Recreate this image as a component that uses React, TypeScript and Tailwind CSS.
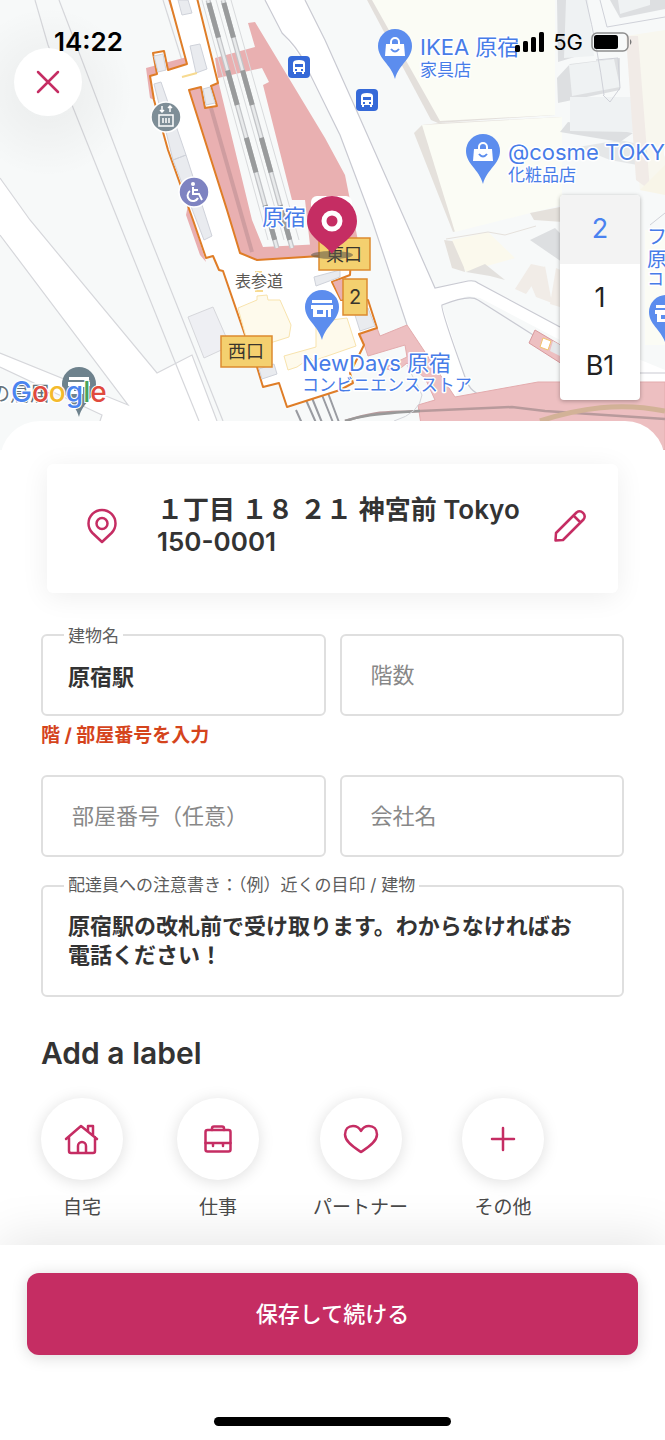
import React from "react";

const bluePin = "M0 0C-4 -15 -17 -20 -17 -33A17 17 0 1 1 17 -33C17 -20 4 -15 0 0Z";

function ShopPin({ x, y }: { x: number; y: number }) {
  return (
    <g transform={`translate(${x} ${y})`}>
      <path d={bluePin} fill="#5c8dee" />
      <path d="M-9 -35H9L10 -23H-10Z" fill="#fff" />
      <path d="M-4 -34V-37A4 4 0 0 1 4 -37V-34" fill="none" stroke="#fff" strokeWidth="2" />
      <path d="M-4 -30Q0 -25 4 -30" fill="none" stroke="#5c8dee" strokeWidth="2" />
    </g>
  );
}

function StorePin({ x, y, color }: { x: number; y: number; color: string }) {
  return (
    <g transform={`translate(${x} ${y})`}>
      <path d={bluePin} fill={color} />
      <path d="M-10 -40H10V-37H-10ZM-11 -35H11V-31H-11ZM-9 -31H9V-23H-9Z" fill="#fff" />
      <path d="M-5 -30H1V-26H-5ZM4 -30H6V-23H4Z" fill={color} />
    </g>
  );
}

function BusStop({ x, y }: { x: number; y: number }) {
  return (
    <g transform={`translate(${x} ${y})`}>
      <rect x="-11" y="-11" width="22" height="22" rx="4" fill="#3569d8" />
      <path d="M-6 -4Q-6 -7 0 -7Q6 -7 6 -4V5H5V7H3V5H-3V7H-5V5H-6Z" fill="#fff" />
      <path d="M-4 -3H4V0H-4ZM-4 2H-2V4H-4ZM2 2H4V4H2Z" fill="#3569d8" />
    </g>
  );
}

function StationMap() {
  return (
    <svg
      viewBox="0 0 665 450"
      preserveAspectRatio="xMidYMin slice"
      className="absolute inset-0 h-full w-full font-['Inter','Noto_Sans_CJK_JP',sans-serif]"
      role="img"
      aria-label="原宿駅周辺の地図"
    >
      <defs>
        <radialGradient id="halo">
          <stop offset="0.35" stopColor="#000" stopOpacity="0.035" />
          <stop offset="1" stopColor="#000" stopOpacity="0" />
        </radialGradient>
      </defs>
      <rect width="665" height="450" fill="#f7f9f9" />

      {/* paths west of the station */}
      <path d="M0 178L30 220L157 373L192 355L217 421V450H100V421L102 415L0 367V353L128 405L0 235Z" fill="#fff" />
      <g fill="none" stroke="#d6d7db" strokeWidth="1.2">
        <path d="M0 178L30 220L157 373L192 355L217 421" />
        <path d="M0 235L128 405L0 353M0 367L102 415L100 421" />
        <path d="M35 0L48 45L118 220L175 362L199 421M59 0L143 220L223 421" />
        <path d="M163 0L185 70" />
      </g>
      <path d="M188 317L213 307L230 346L204 358Z" fill="#eeeff3" stroke="#d6d7db" />

      {/* main avenue */}
      <path d="M265 0L282 33L300 57L340 135L372 220L407 325L455 397L465 377L442 305L468 296L480 298L665 395V370L560 327L478 283L468 281L435 288L405 220L355 107L325 40L305 0Z" fill="#fff" />
      <g fill="none" stroke="#c9cad2" strokeWidth="1.2">
        <path d="M265 0L282 33Q298 48 304 62L340 135L372 220L407 325" />
        <path d="M305 0L325 40L355 107L405 220L435 288L468 281Q475 280 478 283L560 327" />
        <path d="M560 352L478 300Q470 294 442 305Q440 308 465 377C472 402 500 402 530 392L560 384M640 373H665" />
      </g>

      {/* east side buildings */}
      <path d="M367 0H555V115L438 123L431 120Z" fill="#e3dfdb" />
      <path d="M372 0H555V115L440 121Z" fill="#fbfcf5" />
      <path d="M414 133L422 125L440 123L562 117V202L453 232Z" fill="#e5e1dc" />
      <path d="M422 125L562 117V205L455 232Z" fill="#fbfcf5" />
      <path d="M530 213L560 207L563 222L534 220ZM444 240L452 268L465 272L460 242Z" fill="#e5e1dc" />
      <path d="M452 240L488 232L515 258L466 272Z" fill="#fbf9ed" />
      <path d="M466 272L485 264L505 280L490 276Z" fill="#e3e1de" />
      <path d="M446 239L488 232L505 235L536 226" fill="none" stroke="#e5e1dc" />
      <g fill="#dddfe1">
        <path d="M557 0H580L575 35L591 52L558 62ZM557 78L570 64L620 58V90L558 103ZM560 132L568 122L633 133L620 142ZM530 240L555 228L562 235V262ZM610 0H665V9L620 18Z" />
        <path d="M578 147L610 160L665 170V150L620 140Z" opacity="0.7" />
      </g>
      <path d="M566 0H588L594 56L564 58ZM569 65L614 59L620 87L572 96ZM570 97H631L633 132L570 131ZM618 0H650V5L620 14Z" fill="#eff2f3" />
      <path d="M515 289L531 264L545 267L526 294ZM531 285L545 266L552 303L536 297ZM556 268L565 272L563 308L550 304Z" fill="#f1ece7" />
      <path d="M645 230H665V345H645Z" fill="#fbfcf5" />
      <path d="M626 36L665 30V192L640 190Z" fill="#f8f7ef" />
      <path d="M626 36L638 36L650 190L636 180Z" fill="#f1ebe7" />
      <path d="M586 0Q598 50 604 95M600 0L607 27L665 17M596 60L618 58L620 88L610 102L603 95M650 225L665 213" fill="none" stroke="#cfd1d8" />
      <path d="M640 190L665 165V195Z" fill="#f8f5e8" />

      {/* platforms */}
      <path d="M146 68L187 57L189 66L157 74L154 100L150 98ZM168 0H173L188 60ZM188 205L206 262L200 255L186 215Z" fill="#e9aeb0" />
      <path d="M187 88L218 80L252 220L263 247L322 244V258L257 262L238 254Z" fill="#e9b0b1" />
      <path d="M248 23L255 22L325 138L345 175L354 220L362 262L310 245L305 200L292 200L263 85L269 82L262 68L218 78L215 58L255 47Z" fill="#e9b0b1" />
      <path d="M360 333L377 328L380 336L407 325L455 397L538 382H665V450H425L418 405L435 400L425 378L407 363L396 372L384 368L407 357L405 345L368 356Z" fill="#edbfc1" stroke="#e3abad" strokeWidth="1" />
      <path d="M535 330L562 346V364L529 343Z" fill="#edbfc1" stroke="#d99a9d" />
      <path d="M543 338L551 341L548 350L540 347Z" fill="#fff" stroke="#f2c56e" />
      <path d="M553 341L562 346V357L550 351Z" fill="#e5e7ea" />

      {/* tracks */}
      <g fill="none">
        <path d="M208 0L277 248M223 0L292 248" stroke="#c3c5c8" strokeWidth="5" />
        <path d="M208 0L277 248M223 0L292 248" stroke="#e8eaeb" strokeWidth="2.5" />
        <path d="M208 0L277 248M223 0L292 248" stroke="#999b9c" strokeWidth="5" strokeDasharray="36 34" strokeDashoffset="-3" />
        <path d="M202 0L268 240M216 0L284 240M231 0L299 240" stroke="#d8dadc" />
        <path d="M211 108L252 252" stroke="#cf9da0" strokeWidth="4" />
        <path d="M296 410L305 430M306 400L317 425M312 398L323 425M322 395L334 425M328 393L340 425" stroke="#999ba1" strokeWidth="2" />
        <path d="M345 421C380 410 385 413 420 411L512 407L545 411L665 419" stroke="#b89a9c" strokeWidth="2.5" />
        <path d="M345 421C360 416 372 414 420 411" stroke="#999" strokeWidth="2.5" />
        <path d="M540 421C580 408 620 402 665 411" stroke="#d2b297" strokeWidth="5" />
        <path d="M394 421Q420 413 422 395L407 365" stroke="#d3d5da" />
      </g>

      {/* station concourse */}
      <path
        d="M168 -6L187 64L168 70L164 51L153 53L157 74L150 76L154 100L168 150L193 220L206 258L213 256L219 270L223 271L245 335L257 367L263 387L279 383L287 407L340 390L353 383L350 373L364 345L359 334L377 328L368 300L341 300L332 282L350 275L351 258L320 256L257 260L240 253L227 210L189 90L201 87L205 108L217 106L211 86L218 83L196 -6Z"
        fill="#fff"
        stroke="#df7d27"
        strokeWidth="2"
        strokeLinejoin="round"
      />
      <path d="M333 282L346 278L349 296L341 300Z" fill="#e9b0b1" />
      <g fill="#e9ebef" stroke="#cfd2da" strokeWidth="1">
        <path d="M178 0H188L192 13L182 15ZM190 46L200 44L207 69L196 73ZM154 56L163 54L166 70L158 72ZM154 84L161 82L186 155L173 160ZM173 160L186 155L212 236L204 240ZM203 89L210 87L215 103L206 105ZM354 312L368 308L375 326L360 331ZM314 277L340 270V277L316 286ZM259 369L274 364L277 374L262 379Z" />
      </g>
      <path d="M238 308L257 300V296L267 295L268 300H280L291 325L289 337L270 343L246 337Z" fill="#fefaec" stroke="#f8e3ad" />
      <path d="M284 356L316 347V322L347 318L356 346L313 361L310 358L297 367L288 370Z" fill="#fefaec" stroke="#f8e3ad" />
      <path d="M182 77L197 73M255 272H262M255 291H263" stroke="#f7da90" strokeWidth="2" />

      {/* place markers */}
      <circle cx="166" cy="117" r="15" fill="#7e8e97" stroke="#fff" strokeWidth="1.5" />
      <path d="M159 115H173V126H159ZM163 118V123M166 118V123M169 118V123M162 106V112M170 112V106M160 110L162 112L164 110M168 108L170 106L172 108" fill="none" stroke="#fff" strokeWidth="1.5" />
      <circle cx="194" cy="192" r="15" fill="#7e83c1" stroke="#fff" strokeWidth="1.5" />
      <circle cx="193" cy="184" r="2" fill="#fff" />
      <path d="M193 187V194H199L202 200M193 190H198M190 191A5.500 5.500 0 1 0 198 198" fill="none" stroke="#fff" strokeWidth="2" />
      <BusStop x={299} y={67} />
      <BusStop x={367} y={100} />
      <ShopPin x={395} y={79} />
      <ShopPin x={483} y={184} />
      <StorePin x={322} y={340} color="#5c8dee" />
      <StorePin x={666} y={345} color="#5c8dee" />
      <StorePin x={79} y={417} color="#6e828d" />

      <g fill="#f4d06f" stroke="#dd8b2f" strokeWidth="1.500">
        <rect x="319" y="238" width="51" height="32" />
        <rect x="343" y="279" width="24" height="36" />
        <rect x="221" y="336" width="51" height="31" />
      </g>
      <g fill="#39352d" fontSize="18" textAnchor="middle">
        <text x="344" y="261">東口</text>
        <text x="355" y="304" fontSize="20">2</text>
        <text x="246" y="358">西口</text>
      </g>

      <g stroke="#fff" strokeWidth="3" strokeLinejoin="round" paintOrder="stroke" fill="#477ce8">
        <text x="262" y="225" fontSize="22">原宿</text>
        <text x="420" y="55" fontSize="22">IKEA 原宿</text>
        <text x="420" y="76" fontSize="17">家具店</text>
        <text x="508" y="160" fontSize="22">@cosme TOKYO</text>
        <text x="508" y="181" fontSize="17">化粧品店</text>
        <text x="302" y="371" fontSize="22">NewDays 原宿</text>
        <text x="302" y="391" fontSize="17">コンビニエンスストア</text>
        <text x="647" y="244" fontSize="20">フ</text>
        <text x="647" y="267" fontSize="20">原</text>
        <text x="647" y="285" fontSize="17">コ</text>
        <text x="235" y="287" fontSize="16" fill="#5a5752">表参道</text>
        <text x="-10" y="401" fontSize="20" fill="#65737b">の鳥居</text>
      </g>
      <text x="11" y="402" fontSize="28" fontWeight="500" stroke="#fff" strokeWidth="2" paintOrder="stroke">
        <tspan fill="#4a84f0">G</tspan>
        <tspan fill="#e04a3d">o</tspan>
        <tspan fill="#f4ba2d">o</tspan>
        <tspan fill="#4a84f0">g</tspan>
        <tspan fill="#47a35a">l</tspan>
        <tspan fill="#e04a3d">e</tspan>
      </text>

      {/* selected location */}
      <rect x="311" y="196" width="41" height="40" rx="6" fill="#fff" />
      <ellipse cx="332" cy="255" rx="21" ry="4" fill="#625c4b" opacity="0.6" />
      <path d="M332 254C326 244 307 238 307 221A25 25 0 0 1 357 221C357 238 338 244 332 254Z" fill="#c52d63" />
      <circle cx="332" cy="221" r="8" fill="none" stroke="#fff" strokeWidth="5" />
      <circle cx="48" cy="92" r="85" fill="url(#halo)" />
    </svg>
  );
}

function StatusBar() {
  return (
    <div className="relative z-20 flex items-center justify-between pt-7 pr-8 pl-[54px] text-black">
      <span className="text-[26px] leading-7 font-semibold">14:22</span>
      <div className="flex items-center gap-2">
        <svg width="30" height="20" viewBox="0 0 30 20" aria-hidden="true">
          <rect x="0" y="13" width="5" height="7" rx="1.500" />
          <rect x="8" y="9" width="5" height="11" rx="1.500" />
          <rect x="16" y="5" width="5" height="15" rx="1.500" />
          <rect x="24" y="0" width="5" height="20" rx="1.500" />
        </svg>
        <span className="text-[22px] leading-7">5G</span>
        <svg width="42" height="20" viewBox="0 0 42 20" aria-hidden="true">
          <rect x="1" y="1" width="36" height="18" rx="5" fill="none" stroke="#8d8d8d" strokeWidth="1.500" />
          <rect x="3" y="3" width="24" height="14" rx="2.500" />
          <path d="M39 7Q42 10 39 13Z" fill="#777" />
        </svg>
      </div>
    </div>
  );
}

const floors = ["2", "1", "B1"];

function FloorPicker() {
  return (
    <div className="absolute top-[195px] right-[25px] z-10 flex w-20 flex-col overflow-hidden rounded bg-white shadow-[0_1px_4px_rgba(0,0,0,0.3)]">
      {floors.map((floor, i) => (
        <button
          key={floor}
          type="button"
          aria-pressed={i === 0}
          className={
            i === 0
              ? "h-[69px] bg-[#f3f3f3] text-[27px] text-[#4a82f0]"
              : "h-[68px] text-[27px] text-[#222]"
          }
        >
          {floor}
        </button>
      ))}
    </div>
  );
}

interface FieldProps {
  id: string;
  label: string;
  value?: string;
}

function Field({ id, label, value }: FieldProps) {
  return (
    <div className="relative">
      <label
        htmlFor={id}
        className={
          value
            ? "absolute -top-2.5 left-[23px] bg-white px-1 text-[17px] leading-6 text-[#5c5c5c]"
            : "sr-only"
        }
      >
        {label}
      </label>
      <input
        id={id}
        type="text"
        defaultValue={value}
        placeholder={label}
        className={
          value
            ? "h-[82px] w-full rounded-md border-2 border-[#dfdfdf] px-[25px] text-[22px] font-bold text-[#333] outline-none"
            : "h-[82px] w-full rounded-md border-2 border-[#dfdfdf] px-[29px] text-[22px] text-[#333] outline-none placeholder:text-[#888]"
        }
      />
    </div>
  );
}

function HomeIcon() {
  return (
    <svg width="36" height="32" viewBox="0 0 36 32" aria-hidden="true">
      <path d="M2 16L17 3L33 16M5 14V28Q5 30 7 30H29Q31 30 31 28V14M14 30V23A4 4 0 0 1 22 23V30M24 8V3H29V12" />
    </svg>
  );
}

function BriefcaseIcon() {
  return (
    <svg width="28" height="28" viewBox="0 0 28 28" aria-hidden="true">
      <rect x="1.500" y="5" width="25" height="21.500" rx="2" />
      <path d="M8 5V3.500Q8 1.500 10 1.500H18Q20 1.500 20 3.500V5M1.500 18H26.500M9 18V21M19 18V21" />
    </svg>
  );
}

function HeartIcon() {
  return (
    <svg width="36" height="30" viewBox="0 0 36 30" aria-hidden="true">
      <path d="M18 28C12 24 2 18 2 10.500C2 5 5.500 2 10 2C14 2 16.500 4 18 7C19.500 4 22 2 26 2C30.500 2 34 5 34 10.500C34 18 24 24 18 28Z" />
    </svg>
  );
}

function PlusIcon() {
  return (
    <svg width="26" height="26" viewBox="0 0 26 26" aria-hidden="true">
      <path d="M13 2V24M2 13H24" />
    </svg>
  );
}

const labels = [
  { name: "自宅", Icon: HomeIcon },
  { name: "仕事", Icon: BriefcaseIcon },
  { name: "パートナー", Icon: HeartIcon },
  { name: "その他", Icon: PlusIcon },
];

export default function App() {
  return (
    <div className="flex min-h-screen flex-col overflow-x-hidden bg-white font-['Inter','Noto_Sans_CJK_JP',sans-serif] text-[#333]">
      <header className="relative h-[421px]">
        <div className="absolute inset-x-0 top-0 h-[450px] overflow-hidden">
          <StationMap />
        </div>
        <StatusBar />
        <button
          type="button"
          aria-label="閉じる"
          className="absolute top-12 left-3.5 z-10 flex size-[68px] items-center justify-center rounded-full bg-white"
        >
          <svg width="24" height="24" viewBox="0 0 24 24" fill="none" stroke="#c52d63" strokeWidth="2.5" strokeLinecap="round" aria-hidden="true">
            <path d="M2 2L22 22M22 2L2 22" />
          </svg>
        </button>
        <FloorPicker />
      </header>

      <main className="relative grow rounded-t-[40px] bg-white px-[41px] pt-[43px] pb-5">
        <section className="mx-1.5 flex h-[129px] items-center rounded-md bg-white pr-[31px] pb-1.5 pl-10 shadow-[0_4px_28px_rgba(0,0,0,0.07)]">
          <svg width="30" height="36" viewBox="0 0 30 36" fill="none" stroke="#c52d63" strokeWidth="2.500" strokeLinejoin="round" className="shrink-0" aria-hidden="true">
            <path d="M15 34L5.500 25Q1.500 21 1.500 15.500A13.500 13.500 0 0 1 28.500 15.500Q28.500 21 24.500 25Z" />
            <circle cx="15" cy="15.500" r="5.500" />
          </svg>
          <p className="ml-10 grow text-[26px] leading-8 font-semibold">
            １丁目 １８ ２１ 神宮前 Tokyo
            <br />
            150-0001
          </p>
          <button type="button" aria-label="住所を編集" className="shrink-0">
            <svg width="34" height="34" viewBox="0 0 34 34" fill="none" stroke="#c52d63" strokeWidth="2.500" strokeLinejoin="round" aria-hidden="true">
              <path d="M2.500 31.500L3 24L23.500 3.500A5 5 0 0 1 30.500 10.500L10 31ZM20.500 6.500L27.500 13.500" />
            </svg>
          </button>
        </section>

        <div className="mt-[41px] grid grid-cols-2 gap-x-3.5">
          <Field id="building" label="建物名" value="原宿駅" />
          <Field id="floor" label="階数" />
        </div>
        <p className="mt-2 text-[19px] leading-6 font-bold text-[#d5441c]">階 / 部屋番号を入力</p>
        <div className="mt-[27px] grid grid-cols-2 gap-x-3.5">
          <Field id="room" label="部屋番号（任意）" />
          <Field id="company" label="会社名" />
        </div>

        <div className="relative mt-7">
          <label htmlFor="note" className="absolute -top-3 left-[23px] bg-white px-1 text-[17px] leading-6 text-[#5c5c5c]">
            配達員への注意書き：（例）近くの目印 / 建物
          </label>
          <textarea
            id="note"
            defaultValue="原宿駅の改札前で受け取ります。わからなければお電話ください！"
            className="block h-28 w-full resize-none rounded-md border-2 border-[#dfdfdf] pt-[25px] pr-8 pl-[25px] text-[22px] leading-[29px] font-bold text-[#333] outline-none"
          />
        </div>

        <h2 className="mt-9 text-[30px] leading-10 font-semibold">Add a label</h2>
        <div className="mt-[25px] flex gap-[54px]">
          {labels.map(({ name, Icon }) => (
            <button key={name} type="button" className="flex flex-col items-center gap-3.5">
              <span className="flex size-[82px] items-center justify-center rounded-full bg-white fill-none stroke-[#c52d63] stroke-[2.5px] shadow-[0_2px_16px_rgba(0,0,0,0.13)] [stroke-linecap:round] [stroke-linejoin:round]">
                <Icon />
              </span>
              <span className="text-[19px] leading-7 whitespace-nowrap text-[#4a4a4a]">{name}</span>
            </button>
          ))}
        </div>
      </main>

      <footer className="relative flex flex-col items-center bg-white px-[27px] pt-7 pb-3.5 shadow-[0_-6px_48px_rgba(0,0,0,0.1)]">
        <button
          type="button"
          className="h-[82px] w-full rounded-xl bg-[#c52d63] text-[22px] font-medium text-white shadow-[0_2px_16px_rgba(0,0,0,0.15)]"
        >
          保存して続ける
        </button>
        <div className="mt-[62px] h-[9px] w-[237px] rounded-full bg-black" />
      </footer>
    </div>
  );
}
